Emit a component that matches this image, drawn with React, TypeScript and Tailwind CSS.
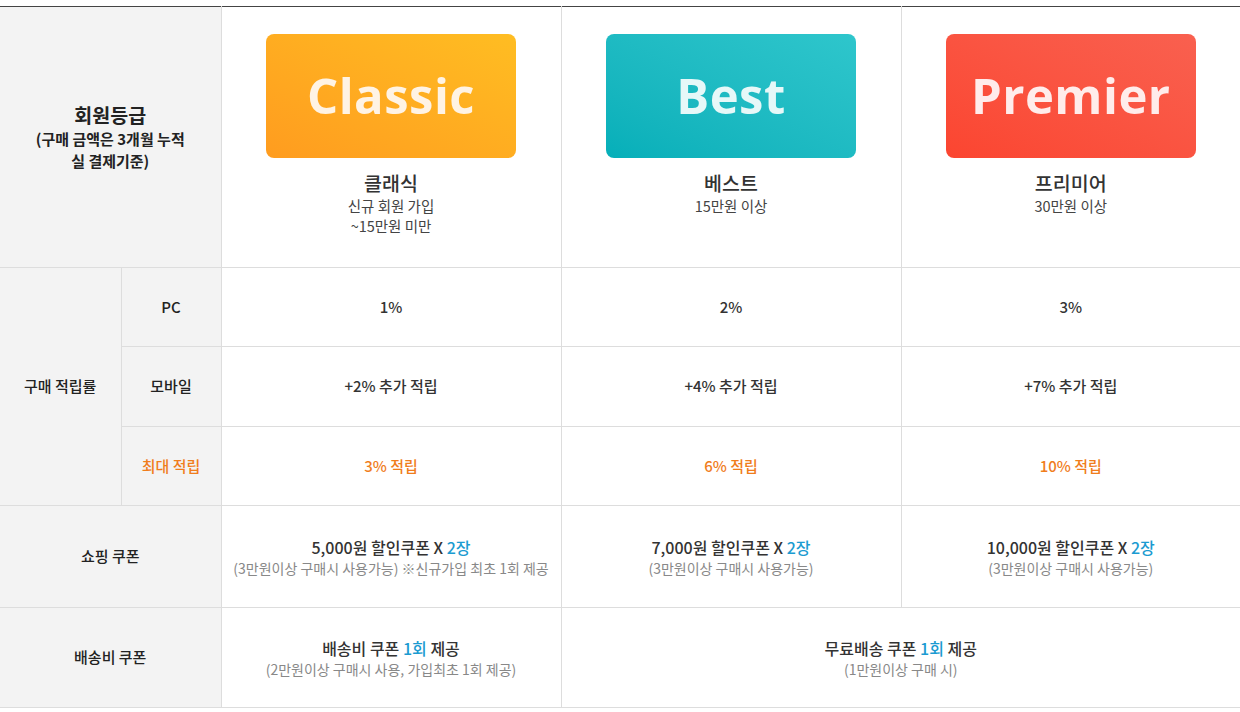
import React from 'react';

const font = { fontFamily: '"Noto Sans CJK KR", "Noto Sans", sans-serif' };

const grades = [
  {
    en: 'Classic',
    ko: '클래식',
    desc: ['신규 회원 가입', '~15만원 미만'],
    bg: 'bg-gradient-to-tr from-[#ff9c1f] to-[#ffbd22]',
    text: 'text-[#fff3e4]',
    pc: '1%',
    mobile: '+2% 추가 적립',
    max: '3% 적립',
    coupon: '5,000원',
    note: '(3만원이상 구매시 사용가능) ※신규가입 최초 1회 제공',
  },
  {
    en: 'Best',
    ko: '베스트',
    desc: ['15만원 이상'],
    bg: 'bg-gradient-to-tr from-[#05afb9] to-[#2ec6cc]',
    text: 'text-[#e6f8f8]',
    pc: '2%',
    mobile: '+4% 추가 적립',
    max: '6% 적립',
    coupon: '7,000원',
    note: '(3만원이상 구매시 사용가능)',
  },
  {
    en: 'Premier',
    ko: '프리미어',
    desc: ['30만원 이상'],
    bg: 'bg-gradient-to-tr from-[#fb4530] to-[#f9604f]',
    text: 'text-[#ffeceb]',
    pc: '3%',
    mobile: '+7% 추가 적립',
    max: '10% 적립',
    coupon: '10,000원',
    note: '(3만원이상 구매시 사용가능)',
  },
];

const App: React.FC = () => {
  const th = 'bg-[#f3f3f3] border border-[#dddddd] text-center align-middle text-[15px] font-medium text-[#222]';
  const td = 'border border-[#dddddd] text-center align-middle text-[15px] text-[#333]';

  return (
    <div className="w-[1240px] h-[712px] bg-white pt-[6px]" style={font}>
      <table className="w-[1240px] table-fixed border-collapse border-t-[1px] border-t-[#444]">
        <colgroup>
          <col className="w-[121px]" />
          <col className="w-[100px]" />
          <col className="w-[340px]" />
          <col className="w-[340px]" />
          <col className="w-[339px]" />
        </colgroup>
        <tbody>
          {/* Grade header */}
          <tr className="h-[261px]">
            <th colSpan={2} className={`${th} border-t-0 border-l-0`}>
              <div className="text-[19.5px] leading-[26px] font-bold text-[#222]">회원등급</div>
              <div className="text-[15px] leading-[22px] font-bold text-[#222]">
                (구매 금액은 3개월 누적
                <br />
                실 결제기준)
              </div>
            </th>
            {grades.map((g) => (
              <td key={g.en} className={`${td} border-t-0 align-top pt-[27px] last:border-r-0`}>
                <div
                  className={`mx-auto w-[250px] h-[124px] rounded-[8px] flex items-center justify-center ${g.bg}`}
                >
                  <span
                    className={`text-[49px] font-bold tracking-[0.5px] ${g.text}`}
                    style={{ fontFamily: '"Open Sans", sans-serif' }}
                  >
                    {g.en}
                  </span>
                </div>
                <div className="mt-[12px] text-[19.5px] leading-[26px] font-medium text-[#333]">{g.ko}</div>
                {g.desc.map((d) => (
                  <div key={d} className="text-[14.5px] leading-[20px] text-[#444]">
                    {d}
                  </div>
                ))}
              </td>
            ))}
          </tr>

          {/* Points */}
          <tr className="h-[79px]">
            <th rowSpan={3} className={`${th} border-l-0`}>
              구매 적립률
            </th>
            <th className={th}>PC</th>
            {grades.map((g) => (
              <td key={g.en} className={`${td} font-medium last:border-r-0`}>
                {g.pc}
              </td>
            ))}
          </tr>
          <tr className="h-[80px]">
            <th className={th}>모바일</th>
            {grades.map((g) => (
              <td key={g.en} className={`${td} font-medium last:border-r-0`}>
                {g.mobile}
              </td>
            ))}
          </tr>
          <tr className="h-[79px]">
            <th className={`${th} text-[#f07d1c]`}>최대 적립</th>
            {grades.map((g) => (
              <td key={g.en} className={`${td} font-medium text-[#f07d1c] last:border-r-0`}>
                {g.max}
              </td>
            ))}
          </tr>

          {/* Shopping coupon */}
          <tr className="h-[102px]">
            <th colSpan={2} className={`${th} border-l-0`}>
              쇼핑 쿠폰
            </th>
            {grades.map((g) => (
              <td key={g.en} className={`${td} last:border-r-0`}>
                <div className="text-[16px] leading-[22px] font-medium text-[#333]">
                  {g.coupon} 할인쿠폰 X <span className="text-[#1b9bd1]">2장</span>
                </div>
                <div className="text-[14px] leading-[20px] text-[#888]">{g.note}</div>
              </td>
            ))}
          </tr>

          {/* Shipping coupon */}
          <tr className="h-[100px]">
            <th colSpan={2} className={`${th} border-l-0`}>
              배송비 쿠폰
            </th>
            <td className={td}>
              <div className="text-[16px] leading-[22px] font-medium text-[#333]">
                배송비 쿠폰 <span className="text-[#1b9bd1]">1회</span> 제공
              </div>
              <div className="text-[14px] leading-[20px] text-[#888]">
                (2만원이상 구매시 사용, 가입최초 1회 제공)
              </div>
            </td>
            <td colSpan={2} className={`${td} border-r-0`}>
              <div className="text-[16px] leading-[22px] font-medium text-[#333]">
                무료배송 쿠폰 <span className="text-[#1b9bd1]">1회</span> 제공
              </div>
              <div className="text-[14px] leading-[20px] text-[#888]">(1만원이상 구매 시)</div>
            </td>
          </tr>
        </tbody>
      </table>
    </div>
  );
};

export default App;
